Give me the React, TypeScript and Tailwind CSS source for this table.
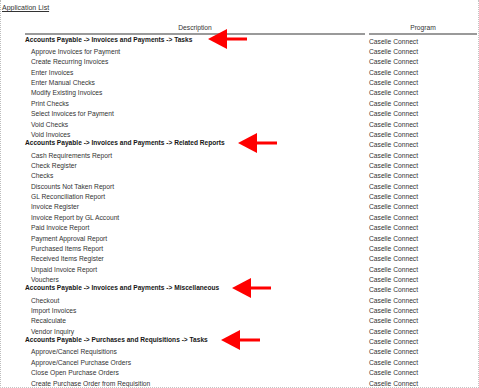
const sections = [
  {
    title: "Accounts Payable -> Invoices and Payments -> Tasks",
    arrowGap: "ml-[16px]",
    items: [
      "Approve Invoices for Payment",
      "Create Recurring Invoices",
      "Enter Invoices",
      "Enter Manual Checks",
      "Modify Existing Invoices",
      "Print Checks",
      "Select Invoices for Payment",
      "Void Checks",
      "Void Invoices",
    ],
  },
  {
    title: "Accounts Payable -> Invoices and Payments -> Related Reports",
    arrowGap: "ml-[13px]",
    items: [
      "Cash Requirements Report",
      "Check Register",
      "Checks",
      "Discounts Not Taken Report",
      "GL Reconciliation Report",
      "Invoice Register",
      "Invoice Report by GL Account",
      "Paid Invoice Report",
      "Payment Approval Report",
      "Purchased Items Report",
      "Received Items Register",
      "Unpaid Invoice Report",
      "Vouchers",
    ],
  },
  {
    title: "Accounts Payable -> Invoices and Payments -> Miscellaneous",
    arrowGap: "ml-[13px]",
    items: ["Checkout", "Import Invoices", "Recalculate", "Vendor Inquiry"],
  },
  {
    title: "Accounts Payable -> Purchases and Requisitions -> Tasks",
    arrowGap: "ml-[13px]",
    items: [
      "Approve/Cancel Requisitions",
      "Approve/Cancel Purchase Orders",
      "Close Open Purchase Orders",
      "Create Purchase Order from Requisition",
    ],
  },
];

function Arrow() {
  return (
    <svg width="39" height="21" viewBox="0 0 39 21" className="absolute left-0 top-[-10.5px]">
      <polygon points="0,10.5 19,0.5 19,20.5" fill="#ff0000" />
      <rect x="18" y="9" width="21" height="3" fill="#ff0000" />
    </svg>
  );
}

function Row({ children, header, arrowGap }: { children: string; header?: boolean; arrowGap?: string }) {
  return (
    <div className="grid grid-cols-[340px_108px] gap-x-[4px] h-[10.37px] items-center">
      {header ? (
        <div className="flex items-center -translate-y-[2.5px] font-bold text-[6.6px] text-[#161616] whitespace-nowrap">
          <span>{children}</span>
          <span className={`relative w-0 h-0 ${arrowGap}`}>
            <Arrow />
          </span>
        </div>
      ) : (
        <div className="pl-[6px] text-[#333] whitespace-nowrap">{children}</div>
      )}
      <div className="text-[#333] whitespace-nowrap">Caselle Connect</div>
    </div>
  );
}

export default function App() {
  return (
    <div
      className="w-[479px] h-[388px] overflow-hidden bg-white border-l border-dotted border-l-[#bdbdbd] border-r border-r-[#c4c4c4] border-b border-b-[#c4c4c4]"
      style={{ fontFamily: '"Liberation Sans", Arial, sans-serif' }}
    >
      <div className="pl-[1px] pt-[3px] h-[12px] text-[7px] leading-[9px] text-[#333] underline">
        Application List
      </div>
      <div className="ml-[24px] text-[6.7px] leading-[8px]">
        <div className="grid grid-cols-[340px_108px] gap-x-[4px] h-[23px] items-end">
          <div className="border-b-2 border-[#9a9a9a] text-center text-[#333] pb-[1px]">Description</div>
          <div className="border-b-2 border-[#9a9a9a] text-center text-[#333] pb-[1px]">Program</div>
        </div>
        <div className="pt-[1.5px]">
          {sections.map((s) => (
            <div key={s.title}>
              <Row header arrowGap={s.arrowGap}>{s.title}</Row>
              {s.items.map((it) => (
                <Row key={it}>{it}</Row>
              ))}
            </div>
          ))}
        </div>
      </div>
    </div>
  );
}
